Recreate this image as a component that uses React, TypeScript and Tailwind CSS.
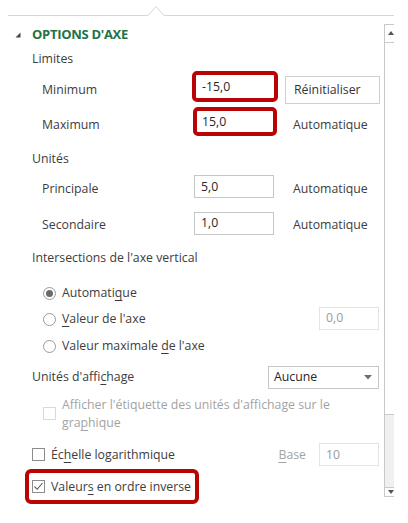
import React from "react";

const Chk = ({ checked = false, disabled = false }: { checked?: boolean; disabled?: boolean }) => (
  <span
    className={`flex h-[13px] w-[13px] shrink-0 items-center justify-center border bg-white ${
      disabled ? "border-[#dadada]" : "border-[#8c8c8c]"
    }`}
  >
    {checked && (
      <svg width="11" height="11" viewBox="0 0 11 11">
        <path d="M1.5 5.5 L4.2 8.3 L9.5 2" fill="none" stroke="#5a5a5a" strokeWidth="1.1" />
      </svg>
    )}
  </span>
);

const Radio = ({ on = false }: { on?: boolean }) => (
  <span className="flex h-[13px] w-[13px] shrink-0 items-center justify-center rounded-full border border-[#9a9a9a] bg-white">
    {on && <span className="h-[7px] w-[7px] rounded-full bg-[#6a6a6a]" />}
  </span>
);

const Field = ({ value, w = "w-[80px]", disabled = false }: { value: string; w?: string; disabled?: boolean }) => (
  <div
    className={`flex h-[23px] items-center border bg-white pl-[6px] ${w} ${
      disabled ? "border-[#e3e3e3] text-[#9a9a9a]" : "border-[#c6c6c6] text-[#262626]"
    }`}
  >
    {value}
  </div>
);

const U = ({ children }: { children: React.ReactNode }) => (
  <span className="underline decoration-1 underline-offset-[3px]">{children}</span>
);

export default function App() {
  return (
    <div className="h-[523px] w-[408px] overflow-hidden whitespace-nowrap bg-white font-['Open_Sans',sans-serif] text-[12.3px] leading-[18px] text-[#3d3d3d]">
      <svg width="408" height="24" className="block">
        <path d="M8 15.5 H148 L156 6.5 L164 15.5 H394" fill="none" stroke="#d6d6d6" strokeWidth="1" />
      </svg>
      <div className="flex">
        <div className="w-[384px]">
          {/* header */}
          <div className="flex h-[20px] items-center">
            <svg width="32" height="20" className="block">
              <path d="M20.5 13.5 L20.5 8.5 L15.5 13.5 Z" fill="#444" />
            </svg>
            <span className="text-[13px] font-bold tracking-[-0.3px] text-[#217346]">OPTIONS D'AXE</span>
          </div>
          <div className="flex h-[30px] items-center pl-[32px]">Limites</div>

          {/* Minimum */}
          <div className="flex h-[32px] items-center">
            <span className="w-[192px] pl-[42px]">Minimum</span>
            <div className="mb-[7px] flex h-[31px] w-[86px] items-center rounded-[5px] border-[4px] border-[#b80404] bg-white pl-[6px] text-[#262626]">
              -15,0
            </div>
            <div className="ml-[7px] flex h-[28px] w-[95px] items-center border border-[#cfcfcf] bg-white pl-[8px] text-[#333]">
              Réinitialiser
            </div>
          </div>

          {/* Maximum */}
          <div className="flex h-[38px] items-center">
            <span className="w-[193px] pl-[42px]">Maximum</span>
            <div className="mb-[7px] flex h-[29px] w-[84px] items-center rounded-[5px] border-[4px] border-[#b80404] bg-white pl-[5px] text-[#262626]">
              15,0
            </div>
            <span className="ml-[16px]">Automatique</span>
          </div>

          <div className="flex h-[30px] items-center pl-[32px]">Unités</div>

          <div className="flex h-[30px] items-center">
            <span className="w-[194px] pl-[42px]">Principale</span>
            <div className="mb-[5px]">
              <Field value="5,0" />
            </div>
            <span className="ml-[19px]">Automatique</span>
          </div>

          <div className="flex h-[42px] items-center">
            <span className="w-[194px] pl-[42px]">Secondaire</span>
            <div className="mb-[4px]">
              <Field value="1,0" />
            </div>
            <span className="ml-[19px]">Automatique</span>
          </div>

          <div className="flex h-[24px] items-center pl-[32px]">Intersections de l'axe vertical</div>

          <div className="mt-[10px] flex h-[26px] items-center gap-[6px] pl-[43px]">
            <Radio on />
            <span>
              Automati<U>q</U>ue
            </span>
          </div>
          <div className="flex h-[26px] items-center pl-[43px] pr-[5px]">
            <Radio />
            <span className="ml-[6px] flex-1">
              <U>V</U>aleur de l'axe
            </span>
            <div className="mb-[2px]">
              <Field value="0,0" w="w-[60px]" disabled />
            </div>
          </div>
          <div className="flex h-[28px] items-center gap-[6px] pl-[43px]">
            <Radio />
            <span>
              Valeur maximale <U>d</U>e l'axe
            </span>
          </div>

          <div className="flex h-[34px] items-center pl-[32px] pr-[5px]">
            <span className="flex-1">
              Unités d'affi<U>c</U>hage
            </span>
            <div className="flex h-[23px] w-[111px] items-center justify-between border border-[#c6c6c6] bg-white pl-[5px] pr-[6px] text-[#262626]">
              <span>Aucune</span>
              <svg width="8" height="5" viewBox="0 0 8 5">
                <path d="M0 0 H8 L4 4.5 Z" fill="#6e6e6e" />
              </svg>
            </div>
          </div>

          <div className="flex h-[46px] items-start pl-[43px] pt-[2px] text-[#a3a3a3]">
            <div className="mt-[11px]">
              <Chk disabled />
            </div>
            <span className="ml-[6px] w-[300px]">
              Afficher l'étiquette des unités d'affichage sur le
              <br />
              gra<U>p</U>hique
            </span>
          </div>

          <div className="flex h-[29px] items-center pl-[32px] pr-[5px]">
            <Chk />
            <span className="ml-[6px] flex-1">
              Éc<U>h</U>elle logarithmique
            </span>
            <span className="mr-[13px] text-[#a3a3a3]">
              <U>B</U>ase
            </span>
            <Field value="10" w="w-[60px]" disabled />
          </div>

          <div className="ml-[25px] flex h-[35px] w-[174px] items-center rounded-[6px] border-[4px] border-[#b80404] pl-[3px]">
            <Chk checked />
            <span className="ml-[6px]">
              Valeur<U>s</U> en ordre inverse
            </span>
          </div>
        </div>

        {/* scrollbar */}
        <div className="flex h-[473px] w-[10px] flex-col">
          <div className="flex h-[18px] items-start justify-end border-l border-t border-[#c9c9c9] bg-white pt-[6px]">
            <svg width="6" height="4" viewBox="0 0 6 4">
              <path d="M0 4 H6 L3 0 Z" fill="#555" />
            </svg>
          </div>
          <div className="h-[373px] border-l border-t border-b border-[#c9c9c9] bg-white" />
          <div className="flex-1 border-l border-[#c9c9c9] bg-[#f0f0f0]" />
          <div className="flex h-[10px] items-center justify-end border-l border-t border-b border-[#c9c9c9] bg-white">
            <svg width="6" height="4" viewBox="0 0 6 4">
              <path d="M0 0 H6 L3 4 Z" fill="#555" />
            </svg>
          </div>
        </div>
      </div>
    </div>
  );
}
